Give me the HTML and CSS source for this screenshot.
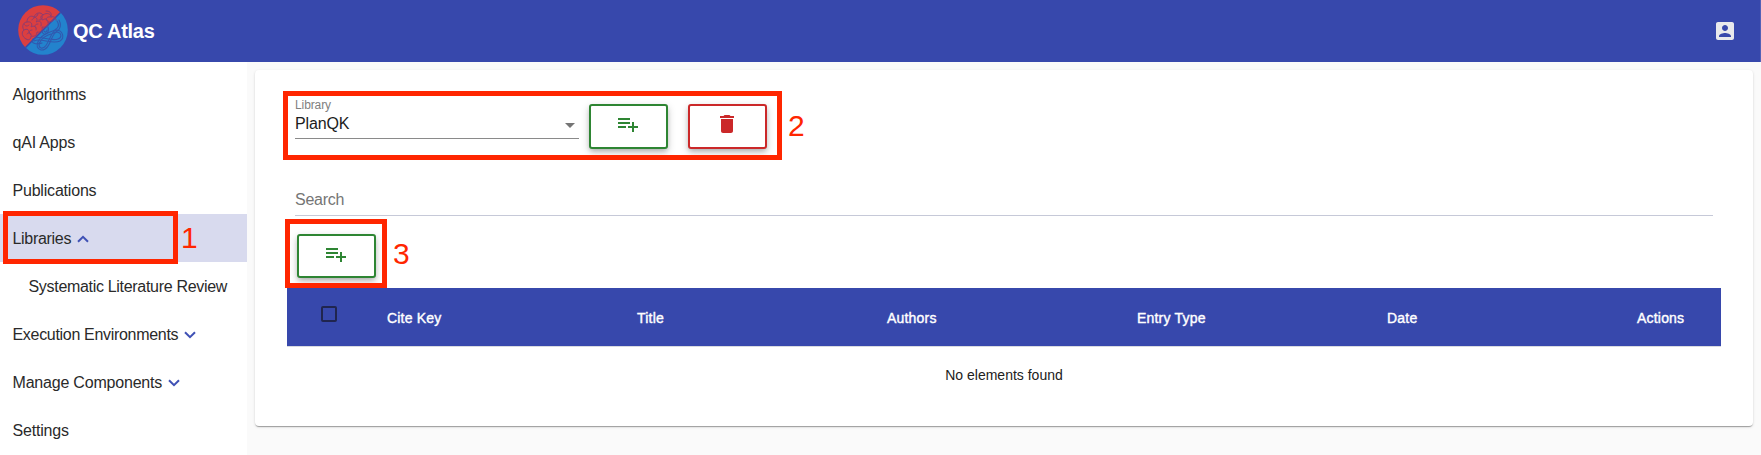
FILE: index.html
```html
<!DOCTYPE html>
<html lang="en">
<head>
<meta charset="utf-8">
<title>QC Atlas</title>
<link rel="stylesheet" href="styles.css">
</head>
<body>
<svg class="defs" width="0" height="0" aria-hidden="true">
  <symbol id="playlist-add" viewBox="0 0 24 24"><path d="M14 10H2v2h12v-2zm0-4H2v2h12V6zm4 8v-4h-2v4h-4v2h4v4h2v-4h4v-2h-4zM2 16h8v-2H2v2z"/></symbol>
  <symbol id="chevron" viewBox="0 0 12 8"><path d="M1 1.2 6 6.2 11 1.2" fill="none" stroke="#3f51b5" stroke-width="2"/></symbol>
</svg>
<header class="topbar">
  <div class="brand">
    <svg class="logo" viewBox="0 0 50 50">
      <clipPath id="disc"><circle cx="25" cy="25" r="24.8"/></clipPath>
      <g clip-path="url(#disc)">
        <path d="M0 50V0H50Z" fill="#db3f40"/>
        <path d="M0 50H50V0Z" fill="#2383cd"/>
        <path d="M0 50 50 0" stroke="#3748ac" stroke-width="1.4"/>
      </g>
      <g fill="none" stroke="#8e3c70" stroke-width="1" stroke-linecap="round">
        <path d="M8 34c-4-2-5-7-2-9-3-4 0-8 3-8 0-5 4-7 7-5 2-5 7-5 9-2 4-3 8-1 8 2 3-1 5 1 5 3"/>
        <path d="M8 34c3 2 5 0 5-3 4 1 6-1 6-4 4 1 6-2 5-5 5 1 7-2 6-5 4 0 7-2 7-5"/>
        <path d="M6 25c3-2 6 0 5 3M9 17c4-1 6 2 4 5 3-2 6 0 5 3M16 12c3 0 4 3 2 5 4-2 6 0 5 4M25 10c-3 1-3 4 0 5 2-2 5-1 5 2M33 12c-4-1-6 2-4 4M11 20c-2 2-4 1-5-1M20 9c-1 4-5 3-6 6M14 25c-3 0-4 3-1 5M20 19c-3 0-4 2-2 4M9 29c1-2 4-2 4 1M28 6c4 0 6 2 5 5M21 15c2 0 4-1 3-4"/>
      </g>
      <g fill="none" stroke="#3158af" stroke-width="1.1" stroke-linecap="round">
        <path d="M24 26c1 6 8 3 6-4M26 26c1 2 3 1 3-1"/>
        <path d="M41 15c4 8-1 12-8 14-10 3-15 12-10 14 7 2 9-17 15-18 7 0 9 8 4 11-8 4-20-4-26 0"/>
        <path d="M39 16c4 6-1 9-7 11-12 4-17 16-9 18 10 1 10-18 16-18 5 1 5 6 1 7-8 3-19-5-25 0-3 4 3 6 9 4"/>
      </g>
    </svg>
    <span class="brand-name">QC Atlas</span>
  </div>
  <svg class="account" viewBox="0 0 24 24"><path d="M3 5v14c0 1.1.89 2 2 2h14c1.1 0 2-.9 2-2V5c0-1.1-.9-2-2-2H5c-1.11 0-2 .9-2 2zm12 4c0 1.66-1.34 3-3 3s-3-1.34-3-3 1.34-3 3-3 3 1.34 3 3zm-9 8c0-2 4-3.1 6-3.1s6 1.1 6 3.1v1H6v-1z"/></svg>
</header>
<div class="body">
  <nav class="sidebar">
    <a class="item">Algorithms</a>
    <a class="item">qAI Apps</a>
    <a class="item">Publications</a>
    <a class="item active tight">Libraries<svg class="chev up"><use href="#chevron"/></svg></a>
    <a class="item sub tight">Systematic Literature Review</a>
    <a class="item tight">Execution Environments<svg class="chev"><use href="#chevron"/></svg></a>
    <a class="item">Manage Components<svg class="chev"><use href="#chevron"/></svg></a>
    <a class="item">Settings</a>
  </nav>
  <main class="content">
    <section class="card">
      <div class="library-row">
        <div class="select">
          <span class="label">Library</span>
          <div class="value">PlanQK<span class="arrow"></span></div>
        </div>
        <button class="btn add"><svg class="icon"><use href="#playlist-add"/></svg></button>
        <button class="btn remove"><svg class="icon" viewBox="0 0 24 24"><path d="M6 19c0 1.1.9 2 2 2h8c1.1 0 2-.9 2-2V7H6v12zM19 4h-3.5l-1-1h-5l-1 1H5v2h14V4z"/></svg></button>
      </div>
      <div class="search">Search</div>
      <button class="btn add row-add"><svg class="icon"><use href="#playlist-add"/></svg></button>
      <div class="thead">
        <span class="check"></span>
        <span>Cite Key</span><span>Title</span><span>Authors</span><span>Entry Type</span><span>Date</span><span>Actions</span>
      </div>
      <div class="empty">No elements found</div>
    </section>
  </main>
</div>
<div class="mark mark-1"></div><span class="num num-1">1</span>
<div class="mark mark-2"></div><span class="num num-2">2</span>
<div class="mark mark-3"></div><span class="num num-3">3</span>
</body>
</html>
```
FILE: styles.css
```css
* { box-sizing: border-box; }
body {
  margin: 0;
  height: 455px;
  overflow: hidden;
  position: relative;
  background: #fafafa;
  font-family: "Liberation Sans", Arial, sans-serif;
  color: #212121;
}
.defs { position: absolute; }

.topbar {
  height: 62px;
  padding: 0 23px 0 18px;
  display: flex;
  align-items: center;
  justify-content: space-between;
  background: #3748ac;
  border-right: 1px solid #5361b6;
}
.brand { display: flex; align-items: center; gap: 5px; }
.logo { width: 50px; height: 50px; margin-top: -2px; }
.brand-name { color: #fff; font-size: 20px; font-weight: bold; letter-spacing: -0.28px; }
.account { width: 24px; height: 24px; fill: #e8e9ec; }

.body { display: flex; height: 393px; }
.sidebar { width: 247px; padding-top: 8px; background: #fff; }
.item {
  display: flex;
  align-items: center;
  height: 48px;
  padding: 2px 0 0 12.5px;
  font-size: 16px;
  letter-spacing: -0.2px;
  color: #2a2a2a;
  white-space: nowrap;
}
.item.active { background: #d8daee; }
.item.sub { padding-left: 28.5px; }
.item.tight { letter-spacing: -0.31px; }
.chev { width: 12px; height: 8px; margin-left: 6px; }
.chev.up { transform: rotate(180deg); }

.content { flex: 1; padding: 8px 8px 0; }
.card {
  height: 356px;
  padding: 27px 32px 0;
  background: #fff;
  border-radius: 4px;
  box-shadow: 0 2px 1px -1px rgba(0,0,0,.2), 0 1px 1px rgba(0,0,0,.14), 0 1px 3px rgba(0,0,0,.12);
}
.library-row { display: flex; height: 83px; padding-left: 8px; }
.select { width: 284px; height: 42px; margin-right: 10px; border-bottom: 1px solid #8a8a8a; }
.label { display: block; font-size: 12px; line-height: 16px; color: #808080; letter-spacing: -0.1px; }
.value { display: flex; align-items: center; justify-content: space-between; height: 20px; margin-top: 1px; font-size: 16px; letter-spacing: -0.15px; color: #1c1c1c; }
.arrow { margin: 2px 4px 0 0; border: 5px solid transparent; border-top-color: #757575; border-bottom: 0; }

.btn {
  display: flex;
  justify-content: center;
  width: 79px;
  height: 45px;
  margin: 7px 20px 0 0;
  padding: 6px 1px 0 0;
  background: #fff;
  border: 2px solid;
  border-radius: 3px;
  box-shadow: 0 3px 5px -1px rgba(0,0,0,.2), 0 3px 8px rgba(0,0,0,.18);
}
.icon { width: 24px; height: 24px; fill: currentColor; }
.add { color: #2e8533; }
.remove { color: #cb2829; }
.search {
  height: 36px;
  margin: 0 8px;
  padding-top: 10px;
  font-size: 16px;
  line-height: 20px;
  color: #757575;
  letter-spacing: -0.25px;
  border-bottom: 1px solid #c6c9d8;
}
.row-add { height: 44px; margin: 18px 0 10px 10px; }

.thead {
  display: grid;
  grid-template-columns: 66px repeat(5, 250px) 1fr;
  align-items: center;
  height: 59px;
  padding-left: 34px;
  background: #3748ac;
  border-bottom: 1px solid #d8dae0;
  color: #fff;
  font-size: 14px;
  letter-spacing: 0.2px;
  -webkit-text-stroke: 0.4px #fff;
}
.thead span:not(.check) { padding-top: 2px; }
.check { width: 16px; height: 16px; margin-top: -6px; border: 2px solid #20254f; border-radius: 2px; }
.empty { padding-top: 19px; text-align: center; font-size: 14px; line-height: 18px; }

/* Numbered callouts over the page */
.mark { position: absolute; border: 5px solid #ff2600; }
.mark-1 { left: 2.5px; top: 210.5px; width: 175px; height: 53px; }
.mark-2 { left: 282.5px; top: 90.5px; width: 499px; height: 69px; }
.mark-3 { left: 284.5px; top: 218.5px; width: 102px; height: 69px; }
.num { position: absolute; color: #ff2600; font-size: 30px; line-height: 34px; }
.num-1 { left: 181px; top: 221px; }
.num-2 { left: 788px; top: 109px; }
.num-3 { left: 393px; top: 237px; }
```
